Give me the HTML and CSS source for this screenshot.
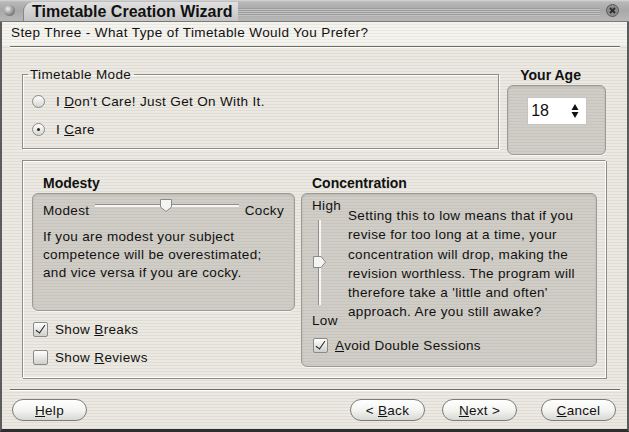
FILE: index.html
```html
<!DOCTYPE html>
<html lang="en">
<head>
    <meta charset="UTF-8">
    <title>Timetable Creation Wizard</title>
    <link rel="stylesheet" href="styles.css">
</head>
<body>
    <div class="window">
        <!-- Title bar -->
        <div class="titlebar">
            <span class="ball"></span>
            <span class="title-tab">Timetable Creation Wizard</span>
            <span class="title-rest"></span>
            <span class="close">
                <svg width="13" height="13" viewBox="0 0 13 13">
                    <circle cx="6.5" cy="6.5" r="6" fill="#8c8c8c" stroke="#5a5a5a"/>
                    <path d="M4 4 L9 9 M9 4 L4 9" stroke="#2a2a2a" stroke-width="1.8"/>
                </svg>
            </span>
        </div>

        <div class="step">Step Three - What Type of Timetable Would You Prefer?</div>
        <div class="sep"></div>

        <div class="content">
            <div class="top-row">
                <fieldset class="mode">
                    <legend>Timetable Mode</legend>
                    <label class="radio"><span class="radio-box"></span><span>I <u>D</u>on't Care! Just Get On With It.</span></label>
                    <label class="radio"><span class="radio-box checked"></span><span>I <u>C</u>are</span></label>
                </fieldset>
                <div class="age">
                    <div class="age-title">Your Age</div>
                    <div class="age-box">
                        <div class="spin">
                            <span>18</span>
                            <svg width="8" height="16" viewBox="0 0 8 16">
                                <path d="M4 1 L7.5 7 L0.5 7 Z M0.5 9 L7.5 9 L4 15 Z" fill="#111"/>
                            </svg>
                        </div>
                    </div>
                </div>
            </div>

            <div class="frame">
                <div class="col col-left">
                    <div class="col-title">Modesty</div>
                    <div class="panel modesty">
                        <div class="hslider-row">
                            <span>Modest</span>
                            <div class="hslider">
                                <svg class="hthumb" width="14" height="15" viewBox="0 0 14 15">
                                    <path d="M1.5 1.5 H12.5 V9 L7 13.5 L1.5 9 Z" fill="#f4f4f2" stroke="#8a8a86"/>
                                </svg>
                            </div>
                            <span>Cocky</span>
                        </div>
                        <p>If you are modest your subject<br>competence will be overestimated;<br>and vice versa if you are cocky.</p>
                    </div>
                    <label class="check"><span class="check-box checked"></span><span>Show <u>B</u>reaks</span></label>
                    <label class="check"><span class="check-box"></span><span>Show <u>R</u>eviews</span></label>
                </div>

                <div class="col col-right">
                    <div class="col-title">Concentration</div>
                    <div class="panel conc">
                        <div class="conc-row">
                            <div class="vslider">
                                <span>High</span>
                                <div class="vtrack">
                                    <svg class="vthumb" width="15" height="14" viewBox="0 0 15 14">
                                        <path d="M1.5 1.5 V12.5 H9 L13.5 7 L9 1.5 Z" fill="#f4f4f2" stroke="#8a8a86"/>
                                    </svg>
                                </div>
                                <span>Low</span>
                            </div>
                            <p>Setting this to low means that if you<br>revise for too long at a time, your<br>concentration will drop, making the<br>revision worthless. The program will<br>therefore take a 'little and often'<br>approach. Are you still awake?</p>
                        </div>
                        <label class="check"><span class="check-box checked"></span><span><u>A</u>void Double Sessions</span></label>
                    </div>
                </div>
            </div>
        </div>

        <div class="sep sep-bottom"></div>

        <div class="buttons">
            <button class="btn"><u>H</u>elp</button>
            <span class="spacer"></span>
            <button class="btn">&lt; <u>B</u>ack</button>
            <button class="btn btn-next"><u>N</u>ext &gt;</button>
            <button class="btn btn-cancel"><u>C</u>ancel</button>
        </div>
    </div>
</body>
</html>
```

FILE: styles.css
```css
body {
    margin: 0;
    font-family: "Liberation Sans", Arial, sans-serif;
    font-size: 13.5px;
    letter-spacing: 0.35px;
    color: #111;
}

.window {
    width: 629px;
    height: 432px;
    box-sizing: border-box;
    border: 2px solid #5c5c5c;
    border-top: none;
    border-bottom: 3px solid #2e2e2e;
    background: repeating-linear-gradient(to bottom, #ebe9e2 0, #ebe9e2 2px, #dedcd4 2px, #dedcd4 3px);
    display: flex;
    flex-direction: column;
}

/* Title bar */
.titlebar {
    height: 21px;
    display: flex;
    align-items: center;
    background: linear-gradient(to bottom, #d8d8d8 0, #b8b8b8 2px, #a8a8a8 10px, #b6b6b6 20px);
    border-bottom: 1px solid #7a7a7a;
    margin: 0 -2px;
    padding: 0 4px;
    letter-spacing: 0;
}

.ball {
    width: 11px;
    height: 11px;
    border-radius: 50%;
    background: radial-gradient(circle at 35% 35%, #f0f0f0 0, #a0a0a0 45%, #505050 100%);
    margin-right: 8px;
}

.title-tab {
    font-weight: bold;
    font-size: 16px;
    line-height: 19px;
    padding: 0 5px 0 8px;
    background: linear-gradient(to bottom, #e0e0e0, #c4c4c4);
    border-radius: 9px 0 0 0;
    border-left: 1px solid #888;
    height: 19px;
    margin-top: 2px;
}

.title-rest {
    flex: 1;
    height: 8px;
    margin-top: 3px;
    background: repeating-linear-gradient(to bottom, #9c9c9c 0, #9c9c9c 1px, #c2c2c2 1px, #c2c2c2 2px);
}

.close {
    display: flex;
    margin-left: 6px;
    margin-right: 6px;
}

/* Step header */
.step {
    height: 24px;
    line-height: 22px;
    padding-left: 9px;
    letter-spacing: 0.4px;
    background: repeating-linear-gradient(to bottom, #f4f3ee 0, #f4f3ee 2px, #e9e8e2 2px, #e9e8e2 3px);
}

.sep {
    height: 0;
    border-top: 1px solid #6e6d68;
    border-bottom: 1px solid #fbfbf8;
    margin: 0 7px 0 8px;
}

.content {
    padding: 19px 21px 0 20px;
    flex: 1;
}

/* Timetable mode + age */
.top-row {
    display: flex;
    align-items: flex-start;
    gap: 8px;
}

.mode {
    width: 478px;
    box-sizing: border-box;
    margin: 0;
    padding: 5px 0 5px 9px;
    border: 1px solid #8e8c86;
    box-shadow: inset 1px 1px 0 #fbfbf8, 1px 1px 0 #fbfbf8;
}

.mode legend {
    padding: 0 3px 0 2px;
    margin-left: -4px;
    line-height: 15px;
}

.radio,
.check {
    display: flex;
    align-items: center;
    height: 28px;
}

.radio-box {
    width: 11px;
    height: 11px;
    border-radius: 50%;
    border: 1px solid #8a8a86;
    background: linear-gradient(to bottom, #ffffff, #d6d6d2);
    margin-right: 11px;
    position: relative;
}

.radio-box.checked::after {
    content: "";
    position: absolute;
    left: 4px;
    top: 4px;
    width: 3px;
    height: 3px;
    border-radius: 50%;
    background: #222;
}

.age {
    width: 99px;
}

.age-title {
    font-weight: bold;
    font-size: 14px;
    line-height: 16px;
    letter-spacing: 0;
    text-align: center;
    margin-bottom: 2px;
    padding-right: 12px;
}

.age-box,
.panel {
    border: 1px solid #9c9a93;
    border-radius: 6px;
    background: repeating-linear-gradient(to bottom, #cfcdc6 0, #cfcdc6 2px, #c7c5be 2px, #c7c5be 3px);
    box-shadow: inset 0 1px 2px rgba(0, 0, 0, 0.12), 0 1px 0 #f6f6f2;
}

.age-box {
    height: 70px;
    box-sizing: border-box;
    padding: 11px 0 0 19px;
}

.spin {
    width: 60px;
    height: 28px;
    box-sizing: border-box;
    background: #fff;
    border: 1px solid #c4c4c0;
    display: flex;
    align-items: center;
    justify-content: space-between;
    padding: 0 7px 0 3px;
    font-size: 16px;
    letter-spacing: 0;
}

/* Big frame */
.frame {
    margin-top: 5px;
    height: 218px;
    box-sizing: border-box;
    border: 1px solid;
    border-color: #8e8c86 #fbfbf8 #fbfbf8 #8e8c86;
    box-shadow: inset 1px 1px 0 #fbfbf8, 1px 1px 0 #8e8c86;
    padding: 14px 8px 0 9px;
    display: flex;
    gap: 6px;
}

.col-left {
    width: 263px;
}

.col-right {
    width: 296px;
}

.col-title {
    font-weight: bold;
    font-size: 14px;
    line-height: 17px;
    letter-spacing: 0;
    margin: 0 0 1px 11px;
}

.panel {
    box-sizing: border-box;
    padding: 0 10px;
}

.modesty {
    height: 118px;
    margin-bottom: 4px;
}

.hslider-row {
    display: flex;
    align-items: center;
    justify-content: space-between;
    height: 16px;
    margin-top: 8px;
}

.hslider {
    flex: 1;
    height: 2px;
    margin: 0 6px 9px 6px;
    background: #f6f6f4;
    border-top: 1px solid #8e8e8a;
    position: relative;
}

.hthumb {
    position: absolute;
    left: 64px;
    top: -7px;
}

.panel p {
    margin: 0;
}

.modesty p {
    margin-top: 10px;
    line-height: 18px;
}

.check {
    padding-left: 1px;
}

.check-box {
    width: 13px;
    height: 13px;
    border: 1px solid #8a8a86;
    border-radius: 2px;
    background: linear-gradient(to bottom, #ffffff, #cfcfcb);
    margin-right: 7px;
    position: relative;
}

.check-box.checked::after {
    content: "";
    position: absolute;
    left: 4px;
    top: 0;
    width: 4px;
    height: 9px;
    border: solid #222;
    border-width: 0 1.5px 1.5px 0;
    transform: rotate(35deg);
}

.conc {
    height: 174px;
    padding: 4px 10px 0 10px;
}

.conc-row {
    display: flex;
}

.vslider {
    width: 36px;
    display: flex;
    flex-direction: column;
    align-items: flex-start;
}

.vslider span {
    line-height: 16px;
}

.vtrack {
    width: 2px;
    height: 85px;
    margin: 6px 0 8px 6px;
    background: #f6f6f4;
    border-left: 1px solid #8e8e8a;
    position: relative;
}

.vthumb {
    position: absolute;
    left: -7px;
    top: 35px;
}

.conc p {
    margin-top: 8px;
    line-height: 19.3px;
}

.conc .check {
    margin-top: 4px;
    height: 24px;
}

/* Bottom buttons */
.sep-bottom {
    margin-top: 10px;
}

.buttons {
    display: flex;
    align-items: center;
    height: 38px;
    padding: 0 11px 0 10px;
}

.spacer {
    flex: 1;
}

.btn {
    width: 75px;
    height: 22px;
    border: 1px solid #7c7c78;
    border-radius: 11px;
    background: linear-gradient(to bottom, #ffffff 0, #f4f4f2 50%, #d8d8d4 100%);
    font-family: "Liberation Sans", Arial, sans-serif;
    font-size: 13.5px;
    letter-spacing: 0.3px;
    color: #111;
    padding: 0;
}

.btn-next {
    margin-left: 17px;
}

.btn-cancel {
    margin-left: 24px;
}
```
